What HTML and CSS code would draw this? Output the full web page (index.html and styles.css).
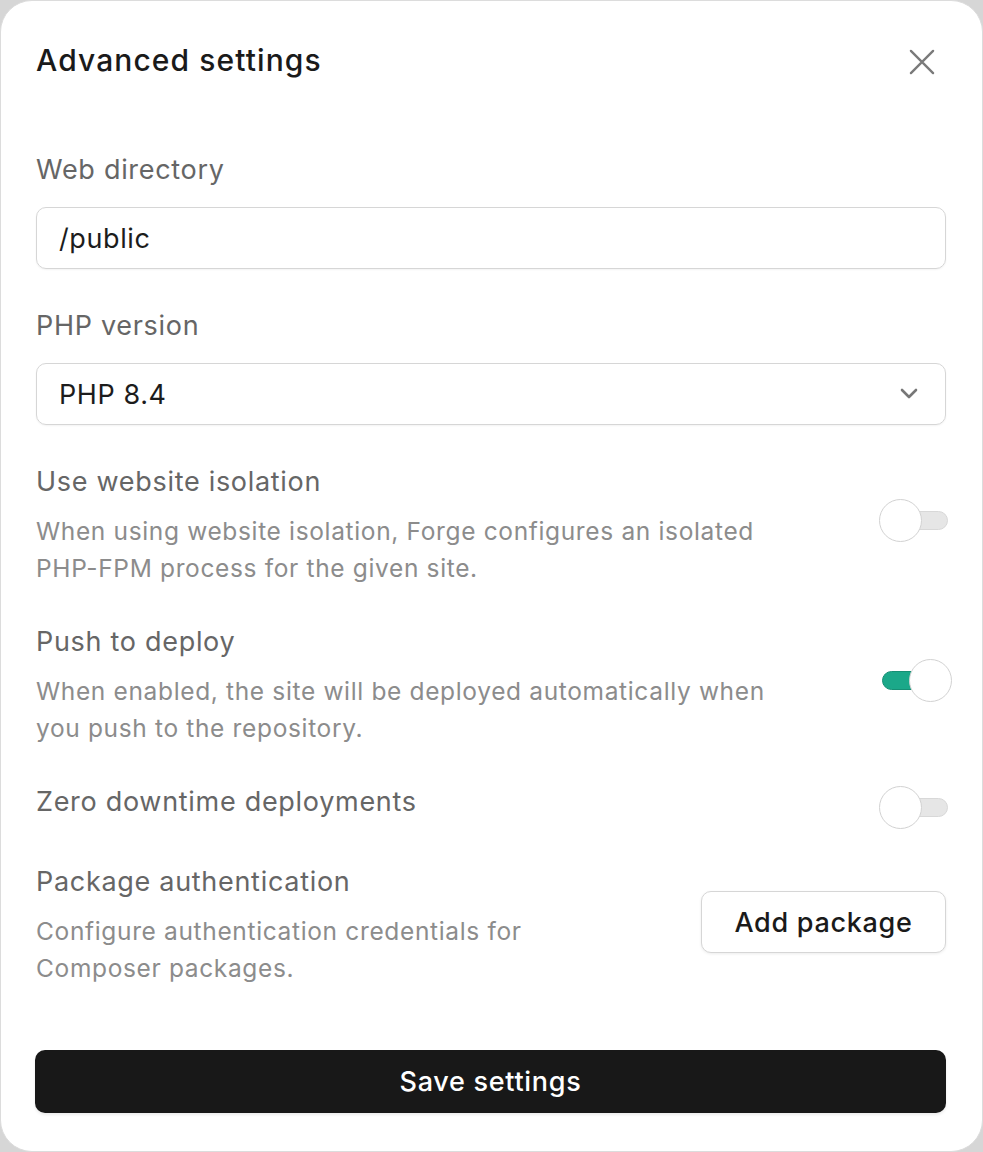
FILE: index.html
```html
<!DOCTYPE html>
<html lang="en">
<head>
    <meta charset="UTF-8">
    <meta name="viewport" content="width=device-width, initial-scale=1.0">
    <title>Advanced settings</title>
    <link rel="stylesheet" href="styles.css">
</head>
<body>
    <div class="modal">
        <div class="modal-header">
            <h1 class="modal-title">Advanced settings</h1>
            <button class="close-btn" aria-label="Close">
                <svg width="28" height="28" viewBox="0 0 24 24" fill="none" stroke="#7a7a7a" stroke-width="2" stroke-linecap="round">
                    <path d="M2.5 2.5 L21.5 21.5 M21.5 2.5 L2.5 21.5"/>
                </svg>
            </button>
        </div>

        <div class="field">
            <label class="label">Web directory</label>
            <div class="input">/public</div>
        </div>

        <div class="field">
            <label class="label">PHP version</label>
            <div class="input select">
                <span>PHP 8.4</span>
                <svg width="20" height="12" viewBox="0 0 20 12" fill="none" stroke="#777" stroke-width="2.6" stroke-linecap="round" stroke-linejoin="round">
                    <path d="M3 2 L10 9 L17 2"/>
                </svg>
            </div>
        </div>

        <div class="option">
            <div class="option-text">
                <div class="label">Use website isolation</div>
                <p class="desc">When using website isolation, Forge configures an isolated <span class="nowrap">PHP-FPM</span> process for the given site.</p>
            </div>
            <div class="toggle"><span class="track"></span><span class="knob"></span></div>
        </div>

        <div class="option">
            <div class="option-text">
                <div class="label">Push to deploy</div>
                <p class="desc">When enabled, the site will be deployed automatically when you push to the repository.</p>
            </div>
            <div class="toggle on"><span class="track"></span><span class="knob"></span></div>
        </div>

        <div class="option single">
            <div class="option-text">
                <div class="label">Zero downtime deployments</div>
            </div>
            <div class="toggle"><span class="track"></span><span class="knob"></span></div>
        </div>

        <div class="option package">
            <div class="option-text">
                <div class="label">Package authentication</div>
                <p class="desc">Configure authentication credentials for Composer packages.</p>
            </div>
            <button class="btn-outline">Add package</button>
        </div>

        <button class="btn-primary">Save settings</button>
    </div>
</body>
</html>
```

FILE: styles.css
```css
* {
    box-sizing: border-box;
}
body {
    margin: 0;
    background-color: #d6d6d6;
    font-family: Inter, "Noto Sans", sans-serif;
}
.modal {
    width: 983px;
    height: 1152px;
    background: #ffffff;
    border: 1px solid #dcdcdc;
    border-radius: 32px;
    padding: 39px 36px 0 35px;
}
.modal-header {
    display: flex;
    justify-content: space-between;
    align-items: center;
    height: 40px;
    margin-bottom: 72px;
}
.modal-title {
    margin: 0;
    font-size: 30px;
    font-weight: 500;
    color: #1a1a1a;
    letter-spacing: 1.1px;
}
.close-btn {
    background: none;
    border: none;
    padding: 0;
    margin-right: 10px;
    margin-top: 3px;
    display: flex;
}
.field {
    margin-bottom: 39px;
}
.label {
    display: block;
    font-size: 27px;
    line-height: 36px;
    color: #666666;
    letter-spacing: 0.7px;
}
.field .label {
    margin-bottom: 19px;
}
.input {
    height: 62px;
    border: 1.5px solid #d6d6d6;
    border-radius: 10px;
    padding: 0 22px;
    display: flex;
    align-items: center;
    font-size: 27px;
    letter-spacing: 0.6px;
    color: #1c1c1c;
    box-shadow: 0 1px 2px rgba(0, 0, 0, 0.05);
}
.select {
    justify-content: space-between;
    padding-right: 26px;
}
.option {
    display: flex;
    align-items: center;
    gap: 60px;
    margin-bottom: 37px;
}
.option-text {
    flex: 1;
}
.desc {
    margin: 13px 0 0;
    max-width: 770px;
    font-size: 24.5px;
    line-height: 37px;
    color: #8c8c8c;
    letter-spacing: 0.65px;
}
.nowrap {
    white-space: nowrap;
}
.toggle {
    position: relative;
    width: 73px;
    height: 43px;
    margin-right: -6px;
    margin-bottom: 10px;
}
.track {
    position: absolute;
    left: 3px;
    right: 4px;
    top: 12px;
    height: 19px;
    border-radius: 10px;
    background: #e6e6e6;
    border: 1px solid #d8d8d8;
}
.knob {
    position: absolute;
    left: 0;
    top: 0;
    width: 43px;
    height: 43px;
    border-radius: 50%;
    background: #ffffff;
    border: 1.5px solid #d2d2d2;
}
.toggle.on .track {
    background: #1ba889;
    border-color: #168f74;
}
.toggle.on .knob {
    left: auto;
    right: 0;
}
.single {
    align-items: flex-start;
    margin-bottom: 35px;
}
.single .toggle {
    margin-top: 2px;
    margin-bottom: 0;
}
.package {
    margin-bottom: 63px;
}
.package .desc {
    max-width: 560px;
}
.btn-outline {
    width: 245px;
    height: 62px;
    background: #ffffff;
    border: 1.5px solid #d6d6d6;
    border-radius: 10px;
    font-family: Inter, "Noto Sans", sans-serif;
    font-size: 27px;
    font-weight: 500;
    letter-spacing: 0.7px;
    color: #1a1a1a;
    box-shadow: 0 1px 3px rgba(0, 0, 0, 0.08);
    margin-bottom: 7px;
}
.btn-primary {
    width: 911px;
    height: 63px;
    margin-left: -1px;
    background: #181818;
    border: none;
    border-radius: 10px;
    color: #ffffff;
    font-family: Inter, "Noto Sans", sans-serif;
    font-size: 27px;
    font-weight: 500;
    letter-spacing: 0.7px;
    box-shadow: 0 2px 3px rgba(0, 0, 0, 0.08);
}
```
